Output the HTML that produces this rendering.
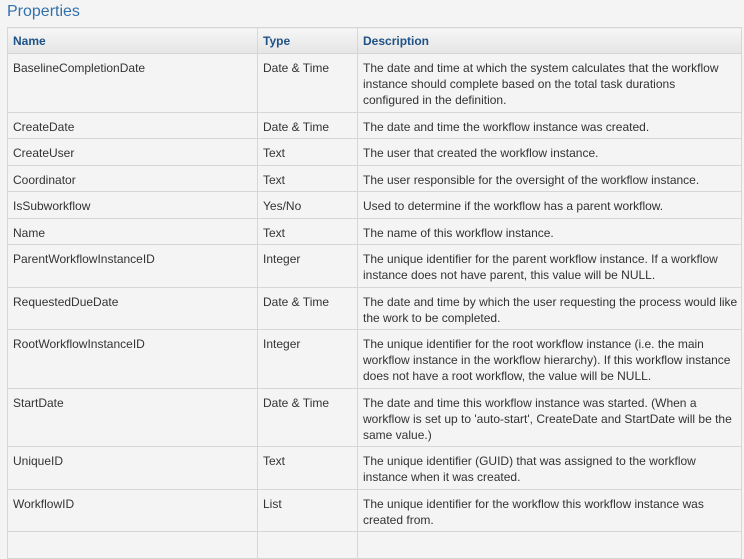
<!DOCTYPE html>
<html><head><style>
body{margin:0;background:#f4f4f4;font-family:"Liberation Sans",sans-serif;width:744px;height:536px;overflow:hidden;}
h1{position:absolute;left:7px;top:3px;margin:0;font-weight:normal;font-size:16px;color:#3470ab;}
table{position:absolute;left:7px;top:27px;width:735px;border-collapse:collapse;table-layout:fixed;}
td,th{border:1px solid #d6d6d6;vertical-align:top;text-align:left;font-size:12px;line-height:16px;color:#333;padding:6px 5px 3.5px 5px;}
th{background:linear-gradient(#f6f6f6,#e5e5e5);color:#1f5286;font-weight:bold;font-size:12px;padding:5px 5px 4px 5px;}
td:nth-child(3){white-space:nowrap;}
</style></head><body>
<h1>Properties</h1>
<table>
<colgroup><col style="width:250px"><col style="width:100px"><col></colgroup>
<tr><th>Name</th><th>Type</th><th>Description</th></tr>
<tr><td>BaselineCompletionDate</td><td>Date &amp; Time</td><td>The date and time at which the system calculates that the workflow<br>instance should complete based on the total task durations<br>configured in the definition.</td></tr>
<tr><td>CreateDate</td><td>Date &amp; Time</td><td>The date and time the workflow instance was created.</td></tr>
<tr><td>CreateUser</td><td>Text</td><td>The user that created the workflow instance.</td></tr>
<tr><td>Coordinator</td><td>Text</td><td>The user responsible for the oversight of the workflow instance.</td></tr>
<tr><td>IsSubworkflow</td><td>Yes/No</td><td>Used to determine if the workflow has a parent workflow.</td></tr>
<tr><td>Name</td><td>Text</td><td>The name of this workflow instance.</td></tr>
<tr><td>ParentWorkflowInstanceID</td><td>Integer</td><td>The unique identifier for the parent workflow instance. If a workflow<br>instance does not have parent, this value will be NULL.</td></tr>
<tr><td>RequestedDueDate</td><td>Date &amp; Time</td><td>The date and time by which the user requesting the process would like<br>the work to be completed.</td></tr>
<tr><td>RootWorkflowInstanceID</td><td>Integer</td><td>The unique identifier for the root workflow instance (i.e. the main<br>workflow instance in the workflow hierarchy). If this workflow instance<br>does not have a root workflow, the value will be NULL.</td></tr>
<tr><td>StartDate</td><td>Date &amp; Time</td><td>The date and time this workflow instance was started. (When a<br>workflow is set up to 'auto-start', CreateDate and StartDate will be the<br>same value.)</td></tr>
<tr><td>UniqueID</td><td>Text</td><td>The unique identifier (GUID) that was assigned to the workflow<br>instance when it was created.</td></tr>
<tr><td>WorkflowID</td><td>List</td><td>The unique identifier for the workflow this workflow instance was<br>created from.</td></tr>
<tr><td>&nbsp;</td><td>&nbsp;</td><td>&nbsp;</td></tr>
</table>
</body></html>
